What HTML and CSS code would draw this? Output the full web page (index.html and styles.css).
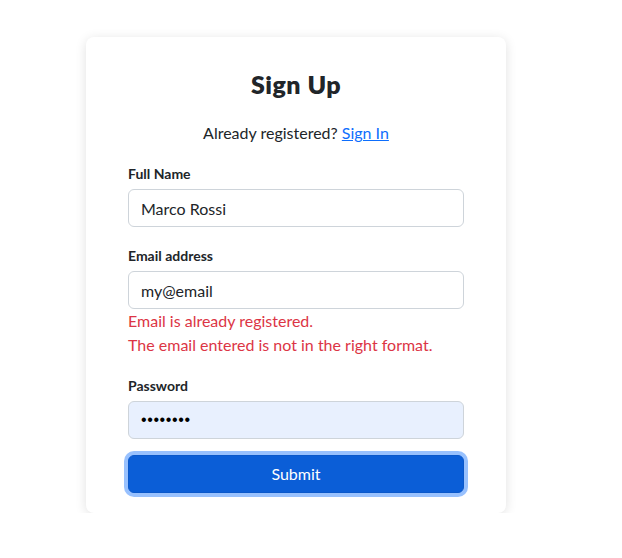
FILE: index.html
```html
<!DOCTYPE html>
<html lang="en">
<head>
<meta charset="utf-8">
<title>Sign Up</title>
<link rel="stylesheet" href="styles.css">
</head>
<body>
<main class="page">
  <form class="card" onsubmit="return false">
    <h1 class="title">Sign Up</h1>
    <p class="subtitle">Already registered? <a href="#" class="link">Sign In</a></p>
    <div class="group">
      <label class="label" for="name">Full Name</label>
      <input class="input" id="name" type="text" value="Marco Rossi">
    </div>
    <div class="group">
      <label class="label" for="email">Email address</label>
      <input class="input" id="email" type="text" value="my@email">
      <div class="error">Email is already registered.</div>
      <div class="error">The email entered is not in the right format.</div>
    </div>
    <div class="group group-last">
      <label class="label" for="password">Password</label>
      <input class="input input-autofill" id="password" type="password" value="12345678">
    </div>
    <button class="btn" type="submit">Submit</button>
  </form>
</main>
</body>
</html>
```
FILE: styles.css
```css
* { box-sizing: border-box; }
html, body { margin: 0; padding: 0; background: #fff; }
body {
  font-family: Lato, "Noto Sans", sans-serif;
  color: #212529;
  font-size: 16px;
  line-height: 1.5;
}
.page {
  padding: 37px 0 0 86px;
}
.card {
  width: 420px;
  background: #fff;
  border-radius: 8px;
  box-shadow: 0 2px 12px rgba(0, 0, 0, 0.12);
  padding: 32px 42px 20px;
  display: flex;
  flex-direction: column;
}
.title {
  margin: 0;
  text-align: center;
  font-size: 25px;
  font-weight: 800;
  letter-spacing: 0.5px;
  line-height: 30px;
}
.subtitle {
  margin: 22px 0 18px;
  text-align: center;
  line-height: 24px;
}
.link { color: #0d6efd; text-decoration: underline; }
.group {
  display: flex;
  flex-direction: column;
  margin-bottom: 18px;
}
.group-last { margin-bottom: 16px; }
.label {
  font-size: 14px;
  font-weight: 700;
  line-height: 21px;
  margin-bottom: 5px;
}
.input {
  height: 38px;
  width: 100%;
  border: 1px solid #ced4da;
  border-radius: 6px;
  padding: 0 12px;
  font: inherit;
  font-size: 16px;
  color: #212529;
  background: #fff;
  outline: none;
}
.input-autofill {
  background: #e8f0fe;
  color: #000;
  font-family: "Liberation Sans", sans-serif;
  font-size: 16px;
  letter-spacing: 0.6px;
}
.error {
  color: #dc3545;
  font-size: 16px;
  line-height: 24px;
}
.btn {
  height: 38px;
  width: 100%;
  border: 1px solid #0a58ca;
  border-radius: 6px;
  background: #0b5ed7;
  color: #fff;
  font: inherit;
  font-size: 16px;
  box-shadow: 0 0 0 4px rgba(49, 132, 253, 0.5);
  cursor: pointer;
}
```
